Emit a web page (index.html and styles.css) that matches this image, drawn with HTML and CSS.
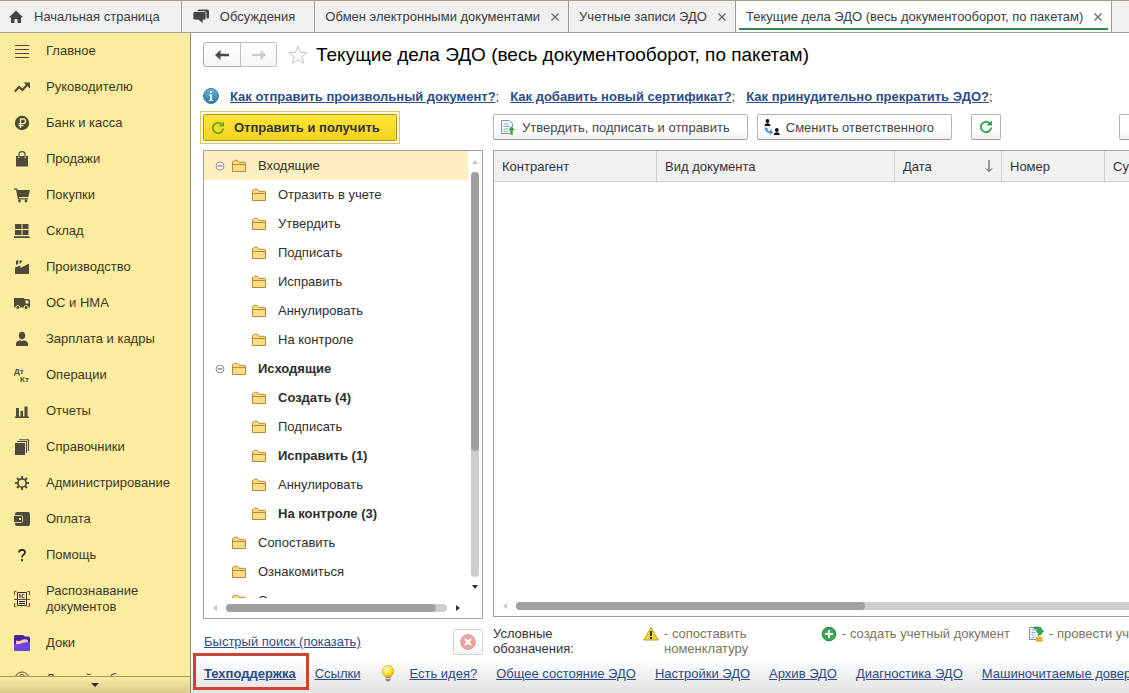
FILE: index.html
```
<!DOCTYPE html>
<html lang="ru">
<head>
<meta charset="utf-8">
<title>Текущие дела ЭДО</title>
<link rel="stylesheet" href="styles.css">
</head>
<body>
<svg class="defs" aria-hidden="true">
  <defs>
    <linearGradient id="gInfo" x1="0" y1="0" x2="0" y2="1"><stop offset="0" stop-color="#6db4d8"/><stop offset="1" stop-color="#2878ad"/></linearGradient>
    <radialGradient id="gBulb" cx=".4" cy=".35" r=".7"><stop offset="0" stop-color="#fffbd0"/><stop offset=".5" stop-color="#ffe640"/><stop offset="1" stop-color="#d9a800"/></radialGradient>
  </defs>
  <symbol id="folder" viewBox="0 0 16 14"><path d="M1.5 12.5v-9.5q0-.8.8-.8l1-.9h3l1.7 2h5.700q.8 0 .8.8v8.400z" fill="#fbdc85" stroke="#b58a35"/><path d="M1.500 5.500h13" stroke="#b58a35"/></symbol>
  <symbol id="minus" viewBox="0 0 10 10"><circle cx="5" cy="5" r="4" fill="#fff" stroke="#8f8f8f"/><path d="M2.500 5h5" stroke="#555"/></symbol>
  <symbol id="close" viewBox="0 0 10 10"><path d="M1.500 1.500l7 7M8.500 1.500l-7 7" stroke="#666" stroke-width="1.200" fill="none"/></symbol>
  <symbol id="refresh" viewBox="0 0 16 16"><path d="M11.600 4.200A5.200 5.200 0 1 0 13.200 8.500" fill="none" stroke="currentColor" stroke-width="1.900"/><path d="M8.500 6.400h5.500V1.500z" fill="currentColor"/></symbol>
</svg>

<nav class="tabs">
  <a class="tab tab-home" href="#"><svg width="16" height="16" viewBox="0 0 16 16"><path d="M8 1.500L.8 8.500H3V14h3.500v-4h3v4H13V8.500h2.200z" fill="#444"/></svg>Начальная страница</a>
  <a class="tab tab-talk" href="#"><svg width="18" height="16" viewBox="0 0 18 16"><path d="M5.500 2q0-1.500 1.500-1.500h8.500Q17 .5 17 2v6q0 1.500-1.200 1.700z" fill="#444"/><path d="M2.500 2.500h10q1.500 0 1.500 1.500v5.500q0 1.500-1.500 1.500H11v4l-4.500-4h-4Q1 11 1 9.500V4q0-1.500 1.500-1.500z" fill="#444" stroke="#f0f0f0" stroke-width=".8"/></svg>Обсуждения</a>
  <a class="tab" href="#">Обмен электронными документами<svg class="x"><use href="#close"/></svg></a>
  <a class="tab" href="#">Учетные записи ЭДО<svg class="x"><use href="#close"/></svg></a>
  <a class="tab active" href="#">Текущие дела ЭДО (весь документооборот, по пакетам)<svg class="x"><use href="#close"/></svg></a>
</nav>

<div class="shell">
  <aside class="side">
    <ul class="menu">
      <li><a href="#"><svg viewBox="0 0 16 16"><path d="M1 2.500h14M1 6.500h14M1 10.500h14M1 14.500h14" stroke="#4d4a39"/></svg>Главное</a></li>
      <li><a href="#"><svg viewBox="0 0 16 16"><path d="M.8 12.500l4.200-4.500 3.500 3 4.500-5" fill="none" stroke="#4d4a39" stroke-width="2"/><path d="M9.500 3.500H16V9.500z" fill="#4d4a39"/></svg>Руководителю</a></li>
      <li><a href="#"><svg viewBox="0 0 16 16"><circle cx="8" cy="8" r="7.200" fill="#4d4a39"/><path d="M6.500 13V4h2.700a2.300 2.300 0 0 1 0 4.700H4.500M4.500 10.700h5" fill="none" stroke="#fbec9f" stroke-width="1.300"/></svg>Банк и касса</a></li>
      <li><a href="#"><svg viewBox="0 0 16 16"><path d="M2 5h2v2h1.500V5h5v2H12V5h2v10.500H2z" fill="#4d4a39"/><path d="M5 6.500V3q0-2.300 3-2.300T11 3v3.500" fill="none" stroke="#4d4a39" stroke-width="1.200"/></svg>Продажи</a></li>
      <li><a href="#"><svg viewBox="0 0 16 16"><path d="M0 1.500h3L3.500 3H16l-1.700 7H4.800l.3 1.200H14v1.300H4L2 2.800H0z" fill="#4d4a39"/><circle cx="5.500" cy="14" r="1.400" fill="#4d4a39"/><circle cx="12" cy="14" r="1.400" fill="#4d4a39"/></svg>Покупки</a></li>
      <li><a href="#"><svg viewBox="0 0 16 16"><path d="M1 1h6.500v5H1zM8.500 1H14.500v5h-6zM1 7h6.500v5H1zM8.500 7h6v5h-6zM0 13.300h15.500v1.700H0z" fill="#4d4a39"/></svg>Склад</a></li>
      <li><a href="#"><svg viewBox="0 0 16 16"><path d="M1 15V8.500l5.500-2v2.500L15 4.500V15zM2 1.500h2.500L4 5 2 6zM5.500 1.500h3L6.500 4.500h-1z" fill="#4d4a39"/></svg>Производство</a></li>
      <li><a href="#"><svg viewBox="0 0 16 16"><path d="M0 3h10v9.500H0zM9.500 4h4.500q2 0 2 2v6.500H9.500z" fill="#4d4a39"/><path d="M11.500 5.500h2q1 0 1 1V8.500h-3z" fill="#fbec9f"/><g fill="#4d4a39" stroke="#fbec9f"><circle cx="3.800" cy="12.500" r="2"/><circle cx="12.200" cy="12.500" r="2"/></g></svg>ОС и НМА</a></li>
      <li><a href="#"><svg viewBox="0 0 16 16"><ellipse cx="8" cy="4.500" rx="3.200" ry="3.800" fill="#4d4a39"/><path d="M2 15v-2.500q0-2 2.500-2.700L6 9.300q2 1.200 4 0l1.500.5Q14 10.500 14 12.500V15z" fill="#4d4a39"/></svg>Зарплата и кадры</a></li>
      <li><a href="#"><svg viewBox="0 0 16 16"><g font-family="Liberation Sans, sans-serif" font-weight="700" font-size="8" fill="#4d4a39"><text x="0" y="7">Дт</text><text x="6" y="15">Кт</text></g></svg>Операции</a></li>
      <li><a href="#"><svg viewBox="0 0 16 16"><path d="M1 13.500h14V15H1zM2 5h3v8.500H2zM6.500 8h2.500v5.500H6.500zM10.500 3.500h3v10h-3z" fill="#4d4a39"/></svg>Отчеты</a></li>
      <li><a href="#"><svg viewBox="0 0 16 16"><path d="M1 4h10v12H1z" fill="#4d4a39"/><path d="M3 2.500h9.500V14M5 .7h9.500V12" fill="none" stroke="#4d4a39" stroke-width="1.100"/></svg>Справочники</a></li>
      <li><a href="#"><svg viewBox="0 0 16 16"><circle cx="8" cy="8" r="4.200" fill="none" stroke="#4d4a39" stroke-width="1.700"/><path d="M8 1v2.500M8 12.500V15M1 8h2.500M12.500 8H15M3 3l1.800 1.800M11.200 11.200L13 13M13 3l-1.800 1.800M4.800 11.200L3 13" stroke="#4d4a39" stroke-width="2"/></svg>Администрирование</a></li>
      <li><a href="#"><svg viewBox="0 0 16 16"><path d="M1 3q0-2 2-2h11q2 0 2 2v10q0 2-2 2H3q-2 0-2-2z" fill="#4d4a39"/><path d="M0 4.500h7.500q1 0 1 1v5q0 1-1 1H0" fill="#4d4a39" stroke="#d8cc8b"/><path d="M5 7h2v2H5z" fill="#fbec9f"/></svg>Оплата</a></li>
      <li><a href="#"><svg viewBox="0 0 16 16"><path d="M5 5.500q0-2.700 3-2.700t3 2.500q0 1.500-1.500 2.400T8 10.500M8 12v2.200" fill="none" stroke="#222" stroke-width="1.700"/></svg>Помощь</a></li>
      <li class="tall"><a href="#"><svg viewBox="0 0 16 16"><path d="M3.500 1.500h9v13h-9z" fill="#fff8cf" stroke="#40200a"/><path d="M.5 4V.5h2M13.500.5h2V4M.5 12v3.500h2M13.500 15.500h2V12M0 8.500h16" fill="none" stroke="#8a3a1c"/><path d="M5 4l1-1v4M10.500 4Q8 2 8 5t2.500 1.500M5 10.500h6M5 12.500h6" fill="none" stroke="#1a1208"/></svg>Распознавание документов</a></li>
      <li><a href="#"><svg viewBox="0 0 16 16"><path d="M0 1.500Q0 0 1.500 0H9l2 1.500h3.500Q16 1.500 16 3v11.500q0 1.500-1.500 1.500h-13Q0 16 0 14.500z" fill="#4a249c"/><path d="M2 5.500q3 1 6-.5t6 .5V10H2z" fill="#f9c7a8"/><path d="M0 8.500q4 1.500 7 0t9-1.500v7.500q0 1.500-1.500 1.500h-13Q0 16 0 14.500z" fill="#6c45e8"/></svg>Доки</a></li>
      <li><a href="#"><svg viewBox="0 0 16 16"><circle cx="8" cy="8" r="7" fill="none" stroke="#4d4a39"/><circle cx="8" cy="6" r="2.500" fill="none" stroke="#4d4a39"/><path d="M3.500 13q0-3 4.500-3t4.500 3" fill="none" stroke="#4d4a39"/></svg>Личный кабинет</a></li>
    </ul>
    <button class="more" aria-label="Ещё"><i class="arr down big"></i></button>
  </aside>

  <main class="page">
    <header class="head">
      <div class="nav-pair">
        <button aria-label="Назад"><svg width="16" height="12" viewBox="0 0 16 12"><path d="M1 6l5.500-5v3.800H15v2.400H6.500V11z" fill="#4a4a4a"/></svg></button>
        <button aria-label="Вперед"><svg width="16" height="12" viewBox="0 0 16 12"><path d="M15 6L9.500 1v4H1v2h8.500v4z" fill="#c9c9c9"/></svg></button>
      </div>
      <svg class="star" width="20" height="20" viewBox="0 0 20 20"><path d="M10 1.200l2.400 6.200 6.600.3-5.200 4.100 1.800 6.400L10 14.600l-5.600 3.600 1.800-6.400L1 7.700l6.600-.3z" fill="#fff" stroke="#c4c4c4"/></svg>
      <h1>Текущие дела ЭДО (весь документооборот, по пакетам)</h1>
    </header>

    <p class="tips">
      <svg width="16" height="16" viewBox="0 0 16 16"><circle cx="8" cy="8" r="7.500" fill="url(#gInfo)" stroke="#3b7ca5"/><path d="M7 3h2v2H7zM6 6.500h3V12h1.200v1H6v-1h1.200V7.500H6z" fill="#fff"/></svg>
      <span><a href="#">Как отправить произвольный документ?</a>;</span>
      <span><a href="#">Как добавить новый сертификат?</a>;</span>
      <span><a href="#">Как принудительно прекратить ЭДО?</a>;</span>
    </p>

    <div class="work">
      <div class="sendwrap"><button class="send"><svg width="16" height="16"><use href="#refresh"/></svg>Отправить и получить</button></div>
      <div class="toolbar">
        <button class="btn"><svg width="16" height="16" viewBox="0 0 16 16"><path d="M1.500 1.500h8l3 3v10h-11z" fill="#f2f7fb" stroke="#7d93a6"/><path d="M3.500 5h5M3.500 7.500h6M3.500 10h5M3.500 12.500h4" stroke="#94adc2"/><path d="M11.500 7l4 4.500H13V16h-3v-4.500H7.500z" fill="#3fa045" stroke="#fff" stroke-width=".5"/></svg>Утвердить, подписать и отправить</button>
        <button class="btn"><svg width="16" height="16" viewBox="0 0 16 16"><circle cx="3.500" cy="2" r="1.900" fill="#111"/><path d="M.5 7q.3-2.700 3-2.700t3 2.700z" fill="#111"/><circle cx="12.800" cy="11" r="1.900" fill="#111"/><path d="M9.800 16q.3-2.700 3-2.700t3 2.700z" fill="#111"/><path d="M2.200 9.500q0 3.800 4.500 3.800" fill="none" stroke="#3a86c8" stroke-width="1.500"/><path d="M6 10.500l3 2.800-3 2.700zM0 10.500L2.200 8l2.200 2.500z" fill="#3a86c8"/></svg>Сменить ответственного</button>
        <button class="btn square" aria-label="Обновить"><svg width="16" height="16"><use href="#refresh"/></svg></button>
        <button class="btn square last" aria-label="Ещё"></button>
      </div>

      <section class="panel">
        <div class="tree">
          <ul>
            <li><div class="row sel"><svg class="mn"><use href="#minus"/></svg><svg class="fd"><use href="#folder"/></svg>Входящие</div>
              <ul>
                <li class="row"><svg class="fd"><use href="#folder"/></svg>Отразить в учете</li>
                <li class="row"><svg class="fd"><use href="#folder"/></svg>Утвердить</li>
                <li class="row"><svg class="fd"><use href="#folder"/></svg>Подписать</li>
                <li class="row"><svg class="fd"><use href="#folder"/></svg>Исправить</li>
                <li class="row"><svg class="fd"><use href="#folder"/></svg>Аннулировать</li>
                <li class="row"><svg class="fd"><use href="#folder"/></svg>На контроле</li>
              </ul></li>
            <li><div class="row bold"><svg class="mn"><use href="#minus"/></svg><svg class="fd"><use href="#folder"/></svg>Исходящие</div>
              <ul>
                <li class="row bold"><svg class="fd"><use href="#folder"/></svg>Создать (4)</li>
                <li class="row"><svg class="fd"><use href="#folder"/></svg>Подписать</li>
                <li class="row bold"><svg class="fd"><use href="#folder"/></svg>Исправить (1)</li>
                <li class="row"><svg class="fd"><use href="#folder"/></svg>Аннулировать</li>
                <li class="row bold"><svg class="fd"><use href="#folder"/></svg>На контроле (3)</li>
              </ul></li>
            <li class="row leaf"><svg class="fd"><use href="#folder"/></svg>Сопоставить</li>
            <li class="row leaf"><svg class="fd"><use href="#folder"/></svg>Ознакомиться</li>
            <li class="row leaf"><svg class="fd"><use href="#folder"/></svg>Отложенные</li>
          </ul>
        </div>
        <div class="vbar"><i class="arr up dim"></i><div class="track"><div class="thumb"></div></div><i class="arr down"></i></div>
        <div class="hbar"><i class="arr left dim"></i><div class="track"><div class="thumb"></div></div><i class="arr right"></i></div>
      </section>

      <section class="list">
        <table>
          <colgroup><col class="c1"><col class="c2"><col class="c3"><col class="c4"><col></colgroup>
          <thead><tr><th>Контрагент</th><th>Вид документа</th><th><span class="sorted">Дата<svg width="8" height="14" viewBox="0 0 8 14"><path d="M4 1v11M1 9.500l3 3 3-3" fill="none" stroke="#444"/></svg></span></th><th>Номер</th><th>Сумма</th></tr></thead>
        </table>
        <div class="hbar"><i class="arr left dim"></i><div class="track"><div class="thumb"></div></div></div>
      </section>

      <div class="search"><a href="#">Быстрый поиск (показать)</a>
        <button class="btn square clear" aria-label="Очистить"><svg width="16" height="16" viewBox="0 0 16 16"><circle cx="8" cy="8" r="7.500" fill="#eda3a3" stroke="#dfa0a0"/><path d="M5 5l6 6M11 5l-6 6" stroke="#fff" stroke-width="2"/></svg></button></div>
      <div class="legend">
        <div class="cap">Условные обозначения:</div>
        <div class="key match"><svg width="16" height="16" viewBox="0 0 16 16"><path d="M8 1.500L15.300 14H.7z" fill="#f2d83c" stroke="#b79b1f" stroke-linejoin="round"/><path d="M8 5v5M8 11v2" stroke="#222" stroke-width="1.800"/></svg><span>- сопоставить номенклатуру</span></div>
        <div class="key create"><svg width="16" height="16" viewBox="0 0 16 16"><circle cx="8" cy="8" r="6.800" fill="#37ab4c" stroke="#238437"/><path d="M8 4v8M4 8h8" stroke="#fff" stroke-width="2"/></svg><span>- создать учетный документ</span></div>
        <div class="key"><svg width="16" height="16" viewBox="0 0 16 16"><path d="M1.500 1.500h9v12h-9z" fill="#f6fafc" stroke="#7d93a6"/><path d="M3.500 4h3M3.500 6.500h4M3.500 9h3M3.500 11.500h3" stroke="#94adc2"/><path d="M6 1h4.500Q14 1 14 4.500h2L12 9.500 8 4.500h2.500Q10.500 3 6 3z" fill="#33a853" stroke="#1d7d38" stroke-width=".5"/><path d="M8 10.500h6.500V16H8z" fill="#f2cf3c"/><path d="M8 12.300h6.500M8 14.200h6.500" stroke="#b58a1c" stroke-width=".7"/></svg><span>- провести учетный документ</span></div>
      </div>
    </div>

    <footer class="foot">
      <a class="marked" href="#">Техподдержка</a>
      <a href="#">Ссылки</a>
      <svg class="bulb" width="14" height="17" viewBox="0 0 14 17"><path d="M7 .5a5.800 5.800 0 0 1 5.800 5.800Q12.800 9 9.800 12H4.200Q1.200 9 1.200 6.300A5.800 5.800 0 0 1 7 .5z" fill="url(#gBulb)" stroke="#d2b02c" stroke-width=".7"/><path d="M4.500 12h5v3L8 16.500H6L4.500 15z" fill="#8b8b8b"/><path d="M4.500 13.500h5" stroke="#ddd" stroke-width=".8"/></svg>
      <a href="#">Есть идея?</a>
      <a href="#">Общее состояние ЭДО</a>
      <a href="#">Настройки ЭДО</a>
      <a href="#">Архив ЭДО</a>
      <a href="#">Диагностика ЭДО</a>
      <a href="#">Машиночитаемые доверенности</a>
    </footer>
  </main>
</div>
</body>
</html>
```
FILE: styles.css
```
* { box-sizing: border-box; }
body {
  margin: 0;
  height: 100vh;
  display: flex;
  flex-direction: column;
  overflow: hidden;
  font: 13px/15px "Liberation Sans", Arial, sans-serif;
  color: #333;
  background: #fff;
}
ul { list-style: none; margin: 0; padding: 0; }
svg { flex: none; }
button { font: inherit; color: inherit; }
a { color: #2b4c86; }
.defs { position: absolute; width: 0; height: 0; }

.tabs {
  display: flex;
  flex: none;
  height: 33px;
  background: #f0f0f0;
  border-top: 1px solid #a59f82;
  border-bottom: 1px solid #9c9c9c;
}
.tab {
  display: flex;
  align-items: center;
  gap: 10px;
  padding: 0 8px 0 10px;
  border-right: 1px solid #9c9c9c;
  color: #3c3c3c;
  text-decoration: none;
  white-space: nowrap;
}
.tab-home { padding: 0 21px 0 8px; }
.tab-talk { padding-right: 19px; }
.x { width: 10px; height: 10px; }
.tab.active {
  background: linear-gradient(#33854a, #33854a) 3px 27px / calc(100% - 6px) 2px no-repeat #fff;
}

.shell { flex: 1; display: flex; min-height: 0; }
.side {
  width: 191px;
  flex: none;
  display: flex;
  flex-direction: column;
  background: #fbec9f;
  border-right: 1px solid #8f8a68;
}
.menu { flex: 1; min-height: 0; overflow: hidden; }
.menu a {
  display: flex;
  align-items: center;
  gap: 16px;
  height: 36px;
  padding: 0 14px;
  color: #3b3828;
  text-decoration: none;
  line-height: 16px;
}
.menu .tall a { height: 52px; padding-right: 40px; }
.menu svg { width: 16px; height: 16px; }
.more {
  height: 17px;
  flex: none;
  padding: 0;
  border: 0;
  border-top: 1px solid #a39a68;
  background: linear-gradient(#fbec9f, #d8cb8b);
  display: flex;
  align-items: center;
  justify-content: center;
}

.arr { flex: none; width: 0; height: 0; border: 3px solid transparent; color: #333; }
.arr.dim { color: #c4c4c4; }
.arr.up { border-bottom: 4px solid; border-top: 0; }
.arr.down { border-top: 4px solid; border-bottom: 0; }
.arr.big { border-width: 4px 4px 0; }
.arr.left { border-right: 4px solid; border-left: 0; }
.arr.right { border-left: 4px solid; border-right: 0; }

.page {
  flex: 1;
  min-width: 0;
  overflow: hidden;
  display: flex;
  flex-direction: column;
}
.head { display: flex; align-items: center; padding: 9px 12px 0; height: 34px; }
.nav-pair { display: flex; }
.nav-pair button {
  width: 38px;
  height: 25px;
  padding: 0;
  display: flex;
  align-items: center;
  justify-content: center;
  background: linear-gradient(#fff, #f5f5f5);
  border: 1px solid #ababab;
  border-radius: 3px 0 0 3px;
}
.nav-pair button + button { width: 37px; margin-left: -1px; border-color: #c0c0c0; border-radius: 0 3px 3px 0; }
.star { margin: 0 8px 0 11px; }
h1 { margin: 0; font-size: 19px; line-height: 24px; font-weight: 400; color: #000; white-space: nowrap; }

.tips {
  margin: 17px 0 2px;
  padding: 0 12px;
  height: 24px;
  display: flex;
  align-items: center;
  gap: 11px;
  white-space: nowrap;
}
.tips a { font-weight: 700; }

.work {
  flex: 1;
  min-height: 0;
  display: grid;
  grid-template-columns: 280px minmax(0, 1fr);
  grid-template-rows: 34px minmax(0, 1fr) 33px;
  gap: 6px 10px;
  padding-left: 12px;
}
.sendwrap {
  justify-self: start;
  margin: 1px 0 0 -3px;
  height: 33px;
  padding: 2px;
  border: 1px solid #dcc768;
  background: #fdf8d8;
}
.send {
  height: 27px;
  padding: 0 16px 0 6px;
  display: flex;
  align-items: center;
  gap: 8px;
  border: 1px solid #a8982f;
  border-radius: 2px;
  background: linear-gradient(#fde63a, #f4d21b);
  font-weight: 700;
  white-space: nowrap;
}
.send svg { color: #6aa512; }
.toolbar { display: flex; align-items: center; gap: 9px; }
.btn {
  height: 26px;
  flex: none;
  display: flex;
  align-items: center;
  gap: 6px;
  padding: 0 17px 0 6px;
  background: linear-gradient(#fff 60%, #f1f1f1);
  border: 1px solid #b4b4b4;
  border-bottom-color: #999;
  border-radius: 2px;
  color: #444;
  white-space: nowrap;
}
.btn.square { width: 30px; padding: 0; justify-content: center; color: #36a04a; margin-left: 10px; }
.btn.last { margin-left: auto; margin-right: -20px; }

.panel {
  display: grid;
  grid-template-columns: minmax(0, 1fr) 14px;
  grid-template-rows: minmax(0, 1fr) 20px;
  border: 1px solid #a0a0a0;
}
.tree { overflow: hidden; color: #2e2e2e; }
.row { height: 29px; display: flex; align-items: center; gap: 11px; padding-left: 47px; white-space: nowrap; }
div.row { padding-left: 11px; }
.leaf { padding-left: 27px; }
.sel { background: #ffeec0; }
.bold { font-weight: 700; }
.mn { width: 10px; height: 10px; margin-right: -5px; }
.fd { width: 16px; height: 14px; }
.vbar { display: flex; flex-direction: column; align-items: center; gap: 8px; padding: 9px 0; }
.vbar .track { flex: 1; width: 8px; border-radius: 4px; background: #cdcdcd; }
.vbar .thumb { height: 69%; border-radius: 4px; background: #a0a0a0; }
.hbar { display: flex; align-items: center; gap: 9px; padding: 0 22px 0 9px; }
.panel .hbar { grid-column: 1 / -1; }
.hbar .track { flex: 1; height: 8px; border-radius: 4px; background: #cdcdcd; }
.hbar .thumb { width: 95%; height: 8px; border-radius: 4px; background: #a0a0a0; }

.list {
  display: flex;
  flex-direction: column;
  justify-content: space-between;
  margin-bottom: 2px;
  border: 1px solid #a0a0a0;
  border-right: 0;
  overflow: hidden;
}
table { width: 100%; table-layout: fixed; border-collapse: separate; border-spacing: 0; }
.c1 { width: 163px; }
.c2 { width: 238px; }
.c3 { width: 107px; }
.c4 { width: 103px; }
th {
  height: 31px;
  padding: 0 8px;
  background: #f1f1f1;
  border-right: 1px solid #cfcfcf;
  border-bottom: 1px solid #cfcfcf;
  font-weight: 400;
  text-align: left;
  white-space: nowrap;
}
th:last-child { border-right: 0; }
.sorted { display: flex; justify-content: space-between; }
.list .hbar { height: 20px; padding-right: 0; }
.list .track { border-radius: 4px 0 0 4px; }
.list .thumb { width: 57%; }

.search { display: flex; justify-content: space-between; align-items: center; padding: 0 0 0 1px; }
.clear.square { border-color: #d2d2d2; margin: 0; }
.legend { display: flex; align-items: flex-start; padding-top: 1px; color: #333; }
.cap { width: 150px; flex: none; padding-right: 60px; }
.key { display: flex; gap: 5px; flex: none; color: #7b745a; white-space: nowrap; }
.match { width: 178px; white-space: normal; padding-right: 60px; }
.create { width: 207px; }

.foot {
  flex: none;
  height: 35px;
  padding: 0 0 4px 13px;
  display: flex;
  align-items: center;
  gap: 19px;
  background: linear-gradient(#fff, #e2e2e2);
  white-space: nowrap;
}
.marked {
  flex: none;
  margin: -4px -13px 0 -11px;
  padding: 10px 10px 6px 8px;
  border: 3px solid #cb4335;
  font-weight: 700;
}
.bulb { margin: 0 -5px 0 2px; }
```
